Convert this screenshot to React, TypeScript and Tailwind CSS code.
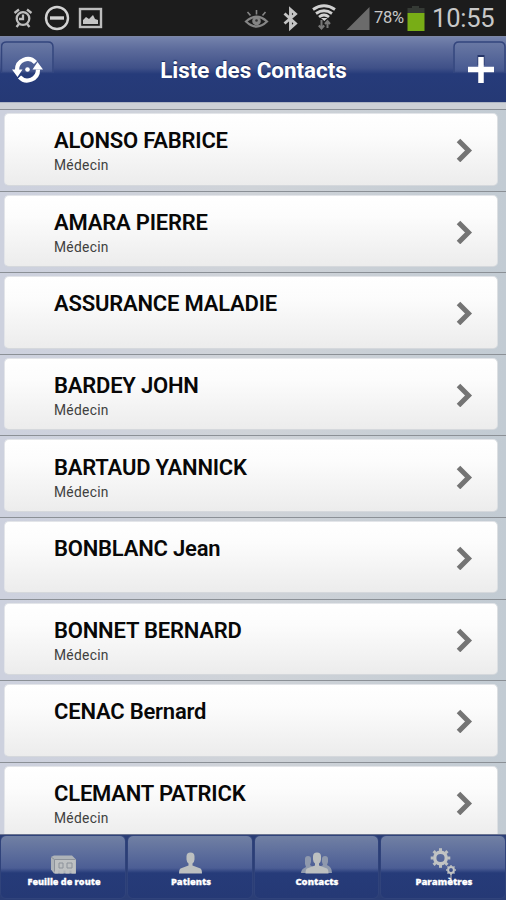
import type { ReactNode } from "react";

const contacts = [
  { name: "ALONSO FABRICE", role: "Médecin" },
  { name: "AMARA PIERRE", role: "Médecin" },
  { name: "ASSURANCE MALADIE", role: "" },
  { name: "BARDEY JOHN", role: "Médecin" },
  { name: "BARTAUD YANNICK", role: "Médecin" },
  { name: "BONBLANC Jean", role: "" },
  { name: "BONNET BERNARD", role: "Médecin" },
  { name: "CENAC Bernard", role: "" },
  { name: "CLEMANT PATRICK", role: "Médecin" },
];

function StatusBar() {
  return (
    <div className="flex h-9 shrink-0 items-center bg-[#1c1c1c] text-[#c8c8c8]">
      <svg className="ml-3 h-9 w-[92px] shrink-0" viewBox="12 0 92 36" fill="none" stroke="#bdbdbd">
        <circle cx="23" cy="18.5" r="6.3" strokeWidth="2.3" />
        <path d="M23 14.5v4.5h-4M14.5 13l4.500-3.500M27 9.500l4.500 3.500M19 24l-2.500 3M27 24l2.500 3" strokeWidth="2.3" />
        <circle cx="57" cy="18" r="11" strokeWidth="2.4" stroke="#d2d2d2" />
        <path d="M50 18h14" strokeWidth="3.4" stroke="#d2d2d2" />
        <rect x="80" y="9" width="21" height="18" strokeWidth="2.4" />
        <path d="M83 24v-4l3-3 3 2 4-4 2 4 3 1v4z" fill="#c5c5c5" stroke="none" />
      </svg>
      <svg className="ml-[140px] h-9 w-[128px] shrink-0" viewBox="244 0 128 36" fill="none">
        <path d="M246 21.500q10.500-9.500 21 0q-10.500 10-21 0z" stroke="#858585" strokeWidth="2.2" />
        <circle cx="256.500" cy="21" r="4.300" fill="#858585" />
        <circle cx="256.500" cy="20.500" r="1.300" fill="#333" />
        <path d="M256.500 10v4.500M247.500 12l3 3.500M265.500 12l-3 3.500" stroke="#858585" strokeWidth="1.600" />
        <path d="M284.500 13.500l11 10-5 4.500V9.500l5 4.500-11 9.500" stroke="#c4c4c4" strokeWidth="2.900" />
        <path d="M313 9.500q11-7.500 22 0M316 13.500q8-5.500 16 0M319 17q5-4 10 0" stroke="#d0d0d0" strokeWidth="2.800" />
        <path d="M321 18h6.500l-3.200 3z" fill="#d0d0d0" />
        <path d="M321.500 20v8M318.800 25.500l2.700 3 2.700-3M327.500 28v-7M325 24l2.500-3 2.500 3" stroke="#777" strokeWidth="2" />
        <path d="M369.500 7v23H346.500z" fill="#6b6b6b" />
      </svg>
      <span className="ml-[2px] w-[33px] whitespace-nowrap text-[16.500px] tracking-[-0.3px]">78%</span>
      <svg className="h-9 w-[18px] shrink-0" viewBox="407 0 18 36">
        <path d="M412 6h7v2h5.500v5H407.500V8h4.500z" fill="#353a35" />
        <path d="M407.500 13h17v18h-17z" fill="#78ad16" />
      </svg>
      <span className="ml-[7px] whitespace-nowrap text-[25.500px] leading-9 tracking-[-0.2px]">10:55</span>
    </div>
  );
}

function Header() {
  return (
    <header className="flex h-[66px] shrink-0 items-start justify-between border-t border-[#7c86a5] bg-[linear-gradient(180deg,#7583ac,#5d6c9c_12px,#3f5088_31px,#263b7a_37px,#253975)]">
      <button className="mt-[4px] ml-px h-[61px] w-[53px] rounded-t-[6px] bg-[linear-gradient(180deg,#6b7aa5,#495b92_28px,#43558c_30px,transparent_32px)]">
        <svg className="h-[61px] w-[53px]" viewBox="1 41 53 61" fill="none">
          <path d="M1.500 72V47q0-5 5-5H48q5 0 5 5v25" stroke="#33457d" strokeWidth="1.500" />
          <path d="M17 70a10.700 10.700 0 0 1 18.500-7.500M38 69.500a10.700 10.700 0 0 1-18.500 7.500" stroke="#fff" strokeWidth="4.200" />
          <path d="M12 69.500h10.500l-5 7.500zM32.500 69.500h10.500l-5.500-7.500z" fill="#fff" />
          <circle cx="27.500" cy="69.500" r="2.300" fill="#fff" />
        </svg>
      </button>
      <h1 className="mt-[17px] whitespace-nowrap text-[22.400px] leading-8 font-bold text-white [text-shadow:0_-1px_1px_#17295a]">
        Liste des Contacts
      </h1>
      <button className="mt-[4px] h-[61px] w-[53px] rounded-t-[6px] bg-[linear-gradient(180deg,#6b7aa5,#495b92_28px,#43558c_30px,transparent_32px)]">
        <svg className="h-[61px] w-[53px]" viewBox="453 41 53 61" fill="none">
          <path d="M454 72V47q0-5 5-5H500q5 0 5 5v25" stroke="#33457d" strokeWidth="1.500" />
          <path d="M481 55v10" stroke="#253568" strokeWidth="7" />
          <path d="M481 57v26M468 69.500h26" stroke="#fff" strokeWidth="5.500" />
        </svg>
      </button>
    </header>
  );
}

function ContactRow({ name, role }: { name: string; role: string }) {
  return (
    <li className="h-[81.6px] shrink-0 border-t-[1.500px] border-[#8b9096] bg-[linear-gradient(90deg,#cdd1de,#cfd3d8_50%,#c2cbd3)] pt-[3px] pr-[8px] pl-[4px]">
      <div className="flex h-[72.500px] items-center rounded-[5px] border border-t-[#e3e5e9] border-r-[#dcdfe2] border-b-[#d5d8dc] border-l-[#e3e5e9] bg-[linear-gradient(180deg,#ffffff,#fcfcfc_30%,#ececec)] pr-[23px] pl-[49px]">
        <div className="h-[54px] flex-1">
          <div className="whitespace-nowrap pt-px text-[22px] leading-[36px] font-semibold tracking-[-0.2px] text-[#080808]">
            {name}
          </div>
          <div className="-mt-px whitespace-nowrap text-[13.800px] leading-[15px] tracking-[0.3px] text-[#404040]">
            {role}
          </div>
        </div>
        <svg className="mt-[2px] h-6 w-[18px]" viewBox="0 0 18 24" fill="none">
          <path d="M2.500 2.500L12.500 12.500L2.500 22.500" stroke="#747474" strokeWidth="5" />
        </svg>
      </div>
    </li>
  );
}

function Tab({ label, width, children }: { label: string; width: number; children: ReactNode }) {
  return (
    <button className="flex h-[64px] min-w-0 flex-1 flex-col items-center rounded-[6px] border border-[#30437b] bg-[linear-gradient(180deg,#7180a4,#4c5e95_32px,#263b79_37px,#253975)]">
      <svg className="h-[39px] w-[80px] shrink-0 overflow-visible" viewBox="0 0 80 39" fill="#bdc0c0">
        {children}
        <text
          x="41"
          y="48.500"
          textAnchor="middle"
          textLength={width}
          lengthAdjust="spacingAndGlyphs"
          fill="#fff"
          stroke="#fff"
          strokeWidth="0.3"
          className="font-['Open_Sans',sans-serif] text-[9.500px] font-extrabold"
        >
          {label}
        </text>
      </svg>
    </button>
  );
}

const teeth = [0, 45, 90, 135, 180, 225, 270, 315];

export default function App() {
  return (
    <div className="flex h-[900px] w-[506px] flex-col overflow-hidden bg-[#cdd1d6] font-[Roboto,sans-serif]">
      <StatusBar />
      <Header />
      <main className="min-h-0 flex-1 overflow-hidden border-t border-[#aeb5c3] pt-[6px]">
        <ul className="flex flex-col">
          {contacts.map((c) => (
            <ContactRow key={c.name} {...c} />
          ))}
        </ul>
      </main>
      <nav className="flex h-[66px] shrink-0 gap-px border-t border-[#6c7590] bg-[#2b3e76]">
        <Tab label="Feuille de route" width={73}>
          <path d="M28 21l3-1.500h18l4 4v14H31l-3-4z" fill="#aeb3b8" />
          <path d="M31.500 23.500h21v14h-4v-3h-2v3h-4v-3h-2v3h-4v-3h-1v3h-3.500z" fill="#bec1c2" />
          <path d="M28 21l3.500 2.500h21M31.500 23.500v12M36 27h4v5h-4zM44 27h5v5h-5z" fill="none" stroke="#8c929a" strokeWidth="1" />
        </Tab>
        <Tab label="Patients" width={40}>
          <path d="M36 21q0-4 4-4t4 4v3q0 2-2 4v2l8 3q1.500 1 1.500 5h-23q0-4 1.500-5l8-3v-2q-2-2-2-4z" transform="translate(.5 -.5)" />
        </Tab>
        <Tab label="Contacts" width={43}>
          <path d="M29 23q0-3 3-3t3 3v3l-1 3 5 3v5H25q0-4 5-6l-1-3zM46 23q0-3 3-3t3 3v3l-1 3q5 2 5 8H42v-5l5-3-1-3z" fill="#8f99ad" />
          <path d="M36 21q0-4 4-4t4 4v3q0 2-2 4v2l8 3q1.500 1 1.500 5h-23q0-4 1.500-5l8-3v-2q-2-2-2-4z" transform="translate(1 -.5)" />
        </Tab>
        <Tab label="Paramètres" width={57}>
          <g transform="translate(37.500 22)">
            <circle r="5.800" fill="none" stroke="#c2c4c4" strokeWidth="3.400" />
            {teeth.map((a) => (
              <path key={a} d="M-1.500 -6.800h3v-3h-3z" transform={`rotate(${a})`} />
            ))}
          </g>
          <g transform="translate(48 34)">
            <circle r="2.900" fill="none" stroke="#c2c4c4" strokeWidth="2" />
            {teeth.map((a) => (
              <path key={a} d="M-.7 -3.500h1.400v-1.500h-1.400z" transform={`rotate(${a})`} />
            ))}
            <path d="M-.5 3h1v9h-1z" />
          </g>
        </Tab>
      </nav>
    </div>
  );
}
